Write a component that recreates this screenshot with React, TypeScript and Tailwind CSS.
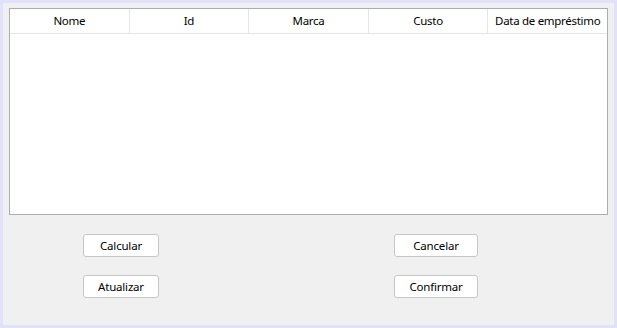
import React from "react";

const cols = ["Nome", "Id", "Marca", "Custo", "Data de empréstimo"];

function Btn({ label, w }: { label: string; w: string }) {
  return (
    <button
      className={`${w} h-[23px] bg-white border border-[#c6c6c6] rounded-[3px] text-[11.5px] tracking-[-0.2px] text-black flex items-center justify-center leading-none`}
    >
      {label}
    </button>
  );
}

export default function App() {
  return (
    <div
      className="w-[617px] h-[328px] border-[3px] border-[#e1e1fa] bg-[#f0f0f0] flex flex-col"
      style={{ fontFamily: '"Noto Sans", "Open Sans", sans-serif' }}
    >
      <div className="pl-[6px] pr-[6px] pt-[5px]">
        <div className="w-[599px] h-[207px] bg-white border border-[#adadad] flex flex-col">
          <div className="flex h-[25px] border-b border-[#e5e5e5]">
            {cols.map((c, i) => (
              <div
                key={c}
                className={`flex-1 flex items-center justify-center text-[11.5px] tracking-[-0.3px] text-black whitespace-nowrap ${
                  i < cols.length - 1 ? "border-r border-[#e5e5e5]" : ""
                }`}
              >
                {c}
              </div>
            ))}
          </div>
        </div>
      </div>
      <div className="flex pl-[80px] pt-[19px]">
        <div className="flex flex-col gap-[18px] w-[311px]">
          <Btn label="Calcular" w="w-[76px]" />
          <Btn label="Atualizar" w="w-[76px]" />
        </div>
        <div className="flex flex-col gap-[18px]">
          <Btn label="Cancelar" w="w-[84px]" />
          <Btn label="Confirmar" w="w-[84px]" />
        </div>
      </div>
    </div>
  );
}
